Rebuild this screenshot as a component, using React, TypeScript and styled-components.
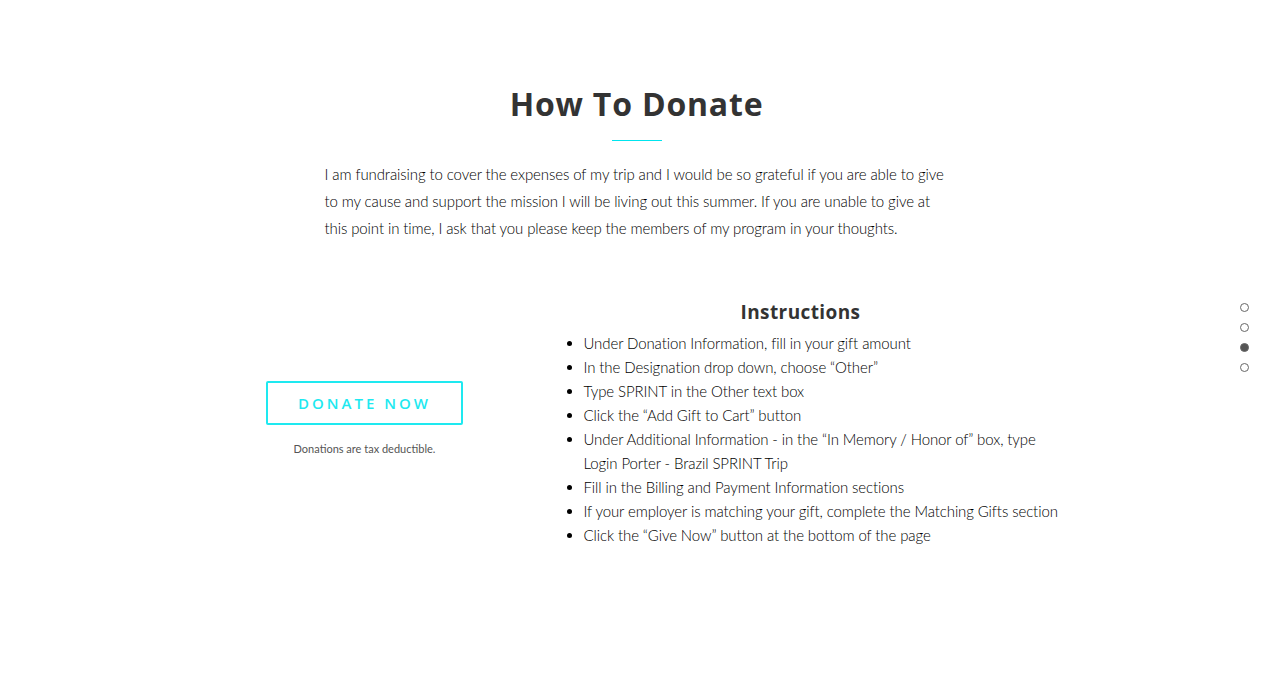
import React from "react";
import styled, { createGlobalStyle } from "styled-components";

const Global = createGlobalStyle`
  html, body { margin: 0; padding: 0; background: #fff; }
  body { font-family: "Lato", "Open Sans", sans-serif; }
`;

const Page = styled.main`
  width: 1273px;
  min-height: 674px;
  padding-top: 84px;
  box-sizing: border-box;
  display: flex;
  flex-direction: column;
  align-items: center;
`;

const Title = styled.h1`
  margin: 0;
  font-family: "Open Sans", sans-serif;
  font-weight: 700;
  font-size: 32px;
  line-height: 40px;
  letter-spacing: 0.8px;
  color: #333;
`;

const Rule = styled.div`
  width: 50px;
  height: 1px;
  background: #00e5ee;
  margin-top: 16px;
`;

const Intro = styled.p`
  margin: 20px 0 0;
  width: 624px;
  font-size: 15px;
  font-weight: 300;
  line-height: 27px;
  letter-spacing: -0.1px;
  color: #000;
`;

const IntroLine = styled.span`
  display: block;
  white-space: nowrap;
`;

const Columns = styled.section`
  display: grid;
  grid-template-columns: 396px 510px;
  width: 940px;
  margin-top: 57px;
`;

const LeftCol = styled.div`
  display: flex;
  flex-direction: column;
  align-items: center;
  justify-content: center;
  padding-bottom: 10px;
`;

const DonateButton = styled.a`
  box-sizing: border-box;
  width: 197px;
  height: 44px;
  border: 2px solid #1ee9f0;
  border-radius: 2px;
  display: flex;
  align-items: center;
  justify-content: center;
  font-family: "Open Sans", sans-serif;
  font-weight: 600;
  font-size: 15px;
  letter-spacing: 3px;
  color: #1ee9f0;
  text-decoration: none;
`;

const Note = styled.p`
  margin: 17px 0 0;
  font-size: 11px;
  color: #555;
`;

const RightCol = styled.div`
  display: flex;
  flex-direction: column;
`;

const SubTitle = styled.h2`
  margin: 0 0 6px;
  width: 476px;
  text-align: center;
  font-family: "Open Sans", sans-serif;
  font-weight: 700;
  font-size: 19px;
  line-height: 26px;
  letter-spacing: 0.4px;
  color: #333;
`;

const Steps = styled.ul`
  margin: 0;
  padding-left: 21px;
  font-size: 15px;
  font-weight: 300;
  line-height: 24px;
  letter-spacing: -0.1px;
  color: #000;
`;

const Step = styled.li``;

const DotNav = styled.nav`
  position: fixed;
  right: 24px;
  top: 303px;
  display: flex;
  flex-direction: column;
  gap: 11px;
`;

const Dot = styled.span<{ $active?: boolean }>`
  box-sizing: border-box;
  width: 9px;
  height: 9px;
  border-radius: 50%;
  border: 1px solid #666;
  background: ${(p) => (p.$active ? "#555" : "transparent")};
`;

const introLines = [
  "I am fundraising to cover the expenses of my trip and I would be so grateful if you are able to give",
  "to my cause and support the mission I will be living out this summer. If you are unable to give at",
  "this point in time, I ask that you please keep the members of my program in your thoughts.",
];

const steps = [
  "Under Donation Information, fill in your gift amount",
  "In the Designation drop down, choose \u201cOther\u201d",
  "Type SPRINT in the Other text box",
  "Click the \u201cAdd Gift to Cart\u201d button",
  "Under Additional Information - in the \u201cIn Memory / Honor of\u201d box, type Login Porter - Brazil SPRINT Trip",
  "Fill in the Billing and Payment Information sections",
  "If your employer is matching your gift, complete the Matching Gifts section",
  "Click the \u201cGive Now\u201d button at the bottom of the page",
];

export default function App() {
  return (
    <>
      <Global />
      <Page>
        <Title>How To Donate</Title>
        <Rule />
        <Intro>
          {introLines.map((l) => (
            <IntroLine key={l}>{l}</IntroLine>
          ))}
        </Intro>
        <Columns>
          <LeftCol>
            <DonateButton href="#">DONATE NOW</DonateButton>
            <Note>Donations are tax deductible.</Note>
          </LeftCol>
          <RightCol>
            <SubTitle>Instructions</SubTitle>
            <Steps>
              {steps.map((s) => (
                <Step key={s}>{s}</Step>
              ))}
            </Steps>
          </RightCol>
        </Columns>
      </Page>
      <DotNav>
        <Dot />
        <Dot />
        <Dot $active />
        <Dot />
      </DotNav>
    </>
  );
}
